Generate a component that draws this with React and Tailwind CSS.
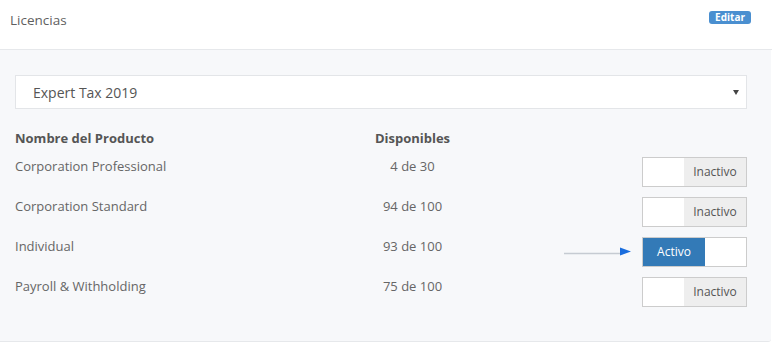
const products = [
  { name: 'Corporation Professional', avail: '4 de 30', active: false },
  { name: 'Corporation Standard', avail: '94 de 100', active: false },
  { name: 'Individual', avail: '93 de 100', active: true },
  { name: 'Payroll & Withholding', avail: '75 de 100', active: false },
]

const Toggle = ({ active }) => (
  <div className="mt-[5px] flex h-[30px] w-[105px] border border-[#cccccc] bg-white text-[12px] leading-[28px]">
    {active ? (
      <>
        <div className="w-[62px] bg-[#337ab7] text-center text-white">Activo</div>
        <div className="flex-1 bg-white" />
      </>
    ) : (
      <>
        <div className="w-[41px] bg-white" />
        <div className="flex-1 bg-[#eeeeee] text-center text-[#555]">Inactivo</div>
      </>
    )}
  </div>
)

const Arrow = () => (
  <svg width="70" height="12" viewBox="0 0 70 12" className="mt-[13px] mr-[9px]">
    <defs>
      <linearGradient id="ag" x1="0" x2="1" y1="0" y2="0">
        <stop offset="0" stopColor="#4d95ea" />
        <stop offset="1" stopColor="#1a6ddd" />
      </linearGradient>
    </defs>
    <line x1="1" y1="8.5" x2="60" y2="8.5" stroke="#8c96a3" strokeWidth="1.5" opacity="0.45" />
    <line x1="1" y1="6.5" x2="60" y2="6.5" stroke="url(#ag)" strokeWidth="2.2" />
    <path d="M57 2.5 L68 6.5 L57 10.5 Z" fill="#1a6ddd" />
  </svg>
)

const App = () => {
  return (
    <div className="h-[343px] w-[772px] bg-white font-['Open_Sans',sans-serif] text-[13px] text-[#666]">
      <div className="flex h-[50px] items-start justify-between border-b border-[#e6e8eb] pl-[10px] pr-[21px]">
        <div className="mt-[10px] text-[13.5px] leading-[20px] text-[#5f5f5f]">Licencias</div>
        <div className="mt-[11px] rounded-[3px] bg-[#4a8fd0] px-[6px] text-[10px] font-bold leading-[13px] text-white">
          Editar
        </div>
      </div>
      <div className="h-[292px] w-[771px] rounded-br-[3px] border-b border-[#e6e8eb] bg-[#f7f8fa] px-[15px] pt-[25px]">
        <div className="flex h-[34px] w-[732px] items-center justify-between border border-[#e3e5e8] bg-white pl-[17px] pr-[7px] text-[14px] text-[#555]">
          <span>Expert Tax 2019</span>
          <svg width="6" height="5" viewBox="0 0 6 5">
            <path d="M0 0 L6 0 L3 5 Z" fill="#444" />
          </svg>
        </div>
        <div className="mt-[19px] flex h-[24px] font-bold leading-[20px] text-[#555]">
          <div className="w-[330px]">Nombre del Producto</div>
          <div className="w-[135px] text-center">Disponibles</div>
        </div>
        {products.map(p => (
          <div key={p.name} className="flex h-[40px] w-[732px] items-start">
            <div className="mt-[4px] w-[330px] leading-[20px]">{p.name}</div>
            <div className="mt-[4px] w-[135px] text-center leading-[20px]">{p.avail}</div>
            <div className="flex flex-1 items-start justify-end">
              {p.active && <Arrow />}
              <Toggle active={p.active} />
            </div>
          </div>
        ))}
      </div>
    </div>
  )
}

export default App
